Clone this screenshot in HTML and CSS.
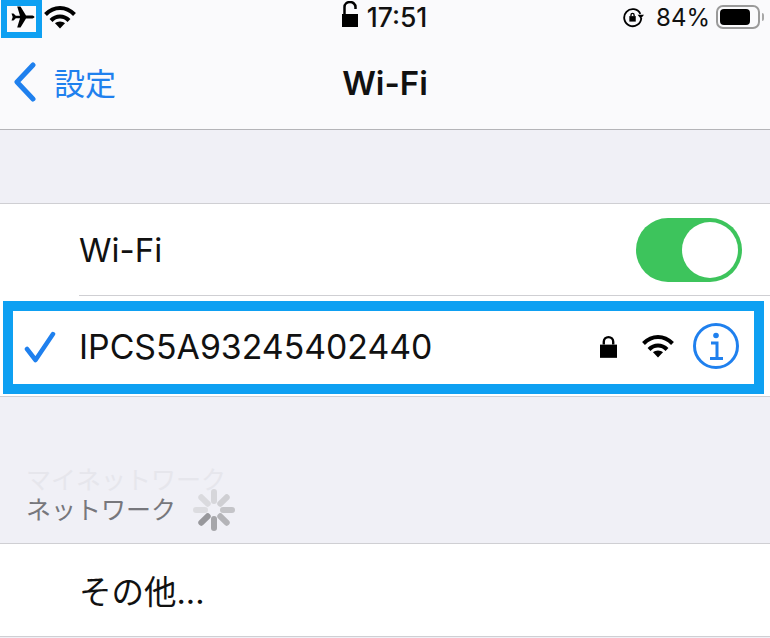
FILE: index.html
```html
<!DOCTYPE html>
<html lang="ja">
<head>
    <meta charset="UTF-8">
    <title>Wi-Fi</title>
    <link rel="stylesheet" href="styles.css">
</head>
<body>
    <div class="screen">
        <header class="top">
            <div class="status">
                <div class="status-left">
                    <svg class="ico-plane" viewBox="0 0 24 24"><path d="M.5 8.500h2l2.300 2.300 4.200-.1L6.200 1.500h3.300l5.500 9.100 5.200-.1c2 0 3.300.6 3.300 1.500s-1.300 1.500-3.300 1.500l-5.200-.1-5.500 9.100H6.200l2.800-9.200-4.200-.1-2.300 2.300h-2l1.200-3.500z"/></svg>
                    <svg class="ico-wifi" viewBox="0 0 32 24"><path d="M1.500 9.500C5.500 5.500 10.500 3 16 3s10.500 2.500 14.500 6.500"/><path d="M7 15.500c2.400-2.500 5.500-4 9-4s6.600 1.500 9 4"/><path class="fill" d="M16 23.500l-5-5.200c1.300-1.200 3-1.900 5-1.900s3.700.7 5 1.900z"/></svg>
                </div>
                <div class="status-mid">
                    <svg class="ico-openlock" viewBox="0 0 18 26"><path class="fill" d="M1 13h16v13H1z"/><path class="shackle" d="M3.500 13V6a5.500 5 0 0 1 11 0v2"/></svg>
                    <span>17:51</span>
                </div>
                <div class="status-right">
                    <svg class="ico-rotate" viewBox="0 0 24 24"><path class="ring" d="M20 8.500A9.300 9.300 0 1 0 21 13"/><path class="fill" d="M17 9.500h7l-3.500 4.500z"/><path class="fill" d="M8 11h7v6H8z"/><path class="shackle-thin" d="M9.800 11V9.700a1.700 1.700 0 0 1 3.400 0V11"/></svg>
                    <span class="pct">84%</span>
                    <div class="battery"><div class="battery-level"></div></div>
                    <div class="battery-tip"></div>
                </div>
            </div>
            <nav class="nav">
                <a class="back">
                    <svg class="ico-back" viewBox="0 0 24 40"><path d="M20 3 4 20l16 17"/></svg>
                    <span>設定</span>
                </a>
                <h1 class="title">Wi-Fi</h1>
            </nav>
        </header>

        <section class="group group-first">
            <div class="row row-wifi">
                <span class="row-label">Wi-Fi</span>
                <div class="toggle"><div class="knob"></div></div>
            </div>
            <div class="row row-network">
                <svg class="ico-check" viewBox="0 0 32 32"><path d="M3 18l8.500 11L29 3"/></svg>
                <span class="row-label">IPCS5A93245402440</span>
                <div class="row-icons">
                    <svg class="ico-lock" viewBox="0 0 18 24"><path class="fill" d="M0 10h18v14H0z"/><path class="shackle" d="M4 10V7a5 5 0 0 1 10 0v3"/></svg>
                    <svg class="ico-wifi-row" viewBox="0 0 32 24"><path d="M1.500 9.500C5.500 5.500 10.500 3 16 3s10.500 2.500 14.500 6.500"/><path d="M7 15.500c2.400-2.500 5.500-4 9-4s6.600 1.500 9 4"/><path class="fill" d="M16 23.500l-5-5.200c1.300-1.200 3-1.900 5-1.900s3.700.7 5 1.900z"/></svg>
                    <svg class="ico-info" viewBox="0 0 46 46"><circle cx="23" cy="23" r="21.500"/><circle class="dot" cx="23" cy="12.500" r="2.800"/><path d="M18 20h6v15M17 35.500h13"/></svg>
                </div>
            </div>
        </section>

        <div class="heading">
            <div class="heading-ghost">マイネットワーク</div>
            <div class="heading-line">
                <span>ネットワーク</span>
                <svg class="spinner" viewBox="0 0 42 42">
                    <path class="s1" d="M21 3v9"/><path class="s2" d="M33.700 8.300l-6.400 6.400"/><path class="s3" d="M39 21h-9"/><path class="s4" d="M33.700 33.700l-6.400-6.400"/><path class="s5" d="M21 39v-9"/><path class="s6" d="M8.300 33.700l6.400-6.400"/><path class="s7" d="M3 21h9"/><path class="s8" d="M8.300 8.300l6.400 6.400"/>
                </svg>
            </div>
        </div>

        <section class="group">
            <div class="row row-other">
                <span class="row-label">その他...</span>
            </div>
        </section>

        <div class="mark mark-plane"></div>
        <div class="mark mark-network"></div>
    </div>
</body>
</html>
```

FILE: styles.css
```css
:root {
    --ios-blue: #1f80ee;
    --line: #cfcfd3;
    --bg-gray: #f0f0f6;
    --mark-blue: #0ea0f2;
    --font-main: 'Inter', 'Noto Sans CJK JP', sans-serif;
}

body {
    margin: 0;
    background: var(--bg-gray);
    color: #111;
    font-family: var(--font-main);
}

.screen {
    position: relative;
    width: 770px;
    height: 638px;
    overflow: hidden;
}

.fill {
    fill: #000;
    stroke: none;
}

/* top bar */
.top {
    height: 129px;
    background: #fafafc;
    border-bottom: 1px solid #b4b4b8;
}

.status {
    height: 34px;
    display: grid;
    grid-template-columns: 1fr auto 1fr;
    align-items: center;
    font-size: 24px;
}

.status-left {
    display: flex;
    align-items: center;
    padding-left: 11px;
    gap: 9px;
}

.status-mid {
    display: flex;
    align-items: center;
    gap: 8px;
    margin-left: -2px;
    font-size: 26.500px;
    font-weight: 500;
}

.status-right {
    display: flex;
    align-items: center;
    justify-content: flex-end;
    padding-right: 6px;
}

.ico-plane {
    width: 24px;
    height: 24px;
}

.ico-wifi,
.ico-wifi-row {
    width: 32px;
    height: 24px;
    fill: none;
    stroke: #000;
    stroke-width: 4;
}

.ico-openlock {
    width: 18px;
    height: 26px;
    margin-top: -6px;
}

.shackle {
    fill: none;
    stroke: #000;
    stroke-width: 2.500;
}

.shackle-thin {
    fill: none;
    stroke: #000;
    stroke-width: 1.500;
}

.ico-rotate {
    width: 22px;
    height: 22px;
    margin-right: 12px;
}

.ring {
    fill: none;
    stroke: #000;
    stroke-width: 2;
}

.pct {
    margin-right: 6px;
}

.battery {
    width: 44px;
    height: 24px;
    box-sizing: border-box;
    border: 2px solid #9a9a9a;
    border-radius: 7px;
    padding: 2px;
}

.battery-level {
    width: 84%;
    height: 100%;
    background: #000;
    border-radius: 4px;
}

.battery-tip {
    width: 2px;
    height: 8px;
    margin-left: 2px;
    background: #a8a8a8;
    border-radius: 0 2px 2px 0;
}

.nav {
    position: relative;
    height: 95px;
    display: flex;
    align-items: center;
    justify-content: center;
}

.back {
    position: absolute;
    left: 13px;
    top: 25px;
    display: flex;
    align-items: center;
    gap: 17px;
    color: var(--ios-blue);
    font-size: 31px;
}

.ico-back {
    width: 24px;
    height: 40px;
    fill: none;
    stroke: var(--ios-blue);
    stroke-width: 5;
    stroke-linecap: round;
    stroke-linejoin: round;
}

.title {
    margin: 3px 0 0;
    font-size: 33px;
    font-weight: 600;
}

/* list */
.group {
    background: #fff;
    border-top: 1px solid var(--line);
    border-bottom: 1px solid var(--line);
}

.group-first {
    margin-top: 73px;
}

.row {
    display: flex;
    align-items: center;
    font-size: 33px;
    padding-left: 79px;
}

.row-wifi {
    height: 91px;
    position: relative;
    padding: 0 28px 1px 79px;
    justify-content: space-between;
}

.row-wifi::after {
    content: "";
    position: absolute;
    left: 79px;
    right: 0;
    bottom: 0;
    height: 1px;
    background: var(--line);
}

.toggle {
    width: 106px;
    height: 64px;
    box-sizing: border-box;
    padding: 4px;
    display: flex;
    justify-content: flex-end;
    background: #3dc45c;
    border-radius: 32px;
}

.knob {
    width: 56px;
    height: 56px;
    background: #fff;
    border-radius: 50%;
}

.row-network {
    position: relative;
    height: 100px;
    padding-right: 31px;
    font-size: 33.800px;
}

.ico-check {
    position: absolute;
    left: 24px;
    top: 35px;
    width: 32px;
    height: 32px;
    fill: none;
    stroke: var(--ios-blue);
    stroke-width: 4.500;
    stroke-linecap: round;
    stroke-linejoin: round;
}

.row-icons {
    margin-left: auto;
    display: flex;
    align-items: center;
}

.ico-lock {
    width: 17px;
    height: 23px;
    margin-right: 25px;
}

.ico-wifi-row {
    margin-right: 19px;
}

.ico-info {
    width: 46px;
    height: 46px;
    fill: none;
    stroke: var(--ios-blue);
    stroke-width: 3;
}

.ico-info .dot {
    fill: var(--ios-blue);
    stroke: none;
}

/* section heading */
.heading {
    height: 146px;
    box-sizing: border-box;
    padding: 68px 0 0 26px;
    font-size: 25px;
    line-height: 30px;
}

.heading-ghost {
    color: #e6e6ec;
}

.heading-line {
    display: flex;
    align-items: center;
    gap: 17px;
    color: #77777c;
}

.spinner {
    width: 42px;
    height: 42px;
    margin: -6px 0;
    fill: none;
    stroke-width: 6;
    stroke-linecap: round;
}

.s1 { stroke: #d6d6da; }
.s2 { stroke: #cfcfd3; }
.s3 { stroke: #c4c4c8; }
.s4 { stroke: #b4b4b8; }
.s5 { stroke: #a6a6aa; }
.s6 { stroke: #98989c; }
.s7 { stroke: #dcdce0; }
.s8 { stroke: #dadade; }

.row-other {
    height: 90px;
    padding-bottom: 2px;
    font-size: 32.500px;
}

/* blue marks over the screenshot */
.mark {
    position: absolute;
    box-sizing: border-box;
    pointer-events: none;
    border-style: solid;
    border-color: var(--mark-blue);
}

.mark-plane {
    left: 1px;
    top: 0;
    width: 41px;
    height: 38px;
    border-width: 6px;
}

.mark-network {
    left: 3px;
    top: 301px;
    width: 761px;
    height: 93px;
    border-width: 10px;
}
```
